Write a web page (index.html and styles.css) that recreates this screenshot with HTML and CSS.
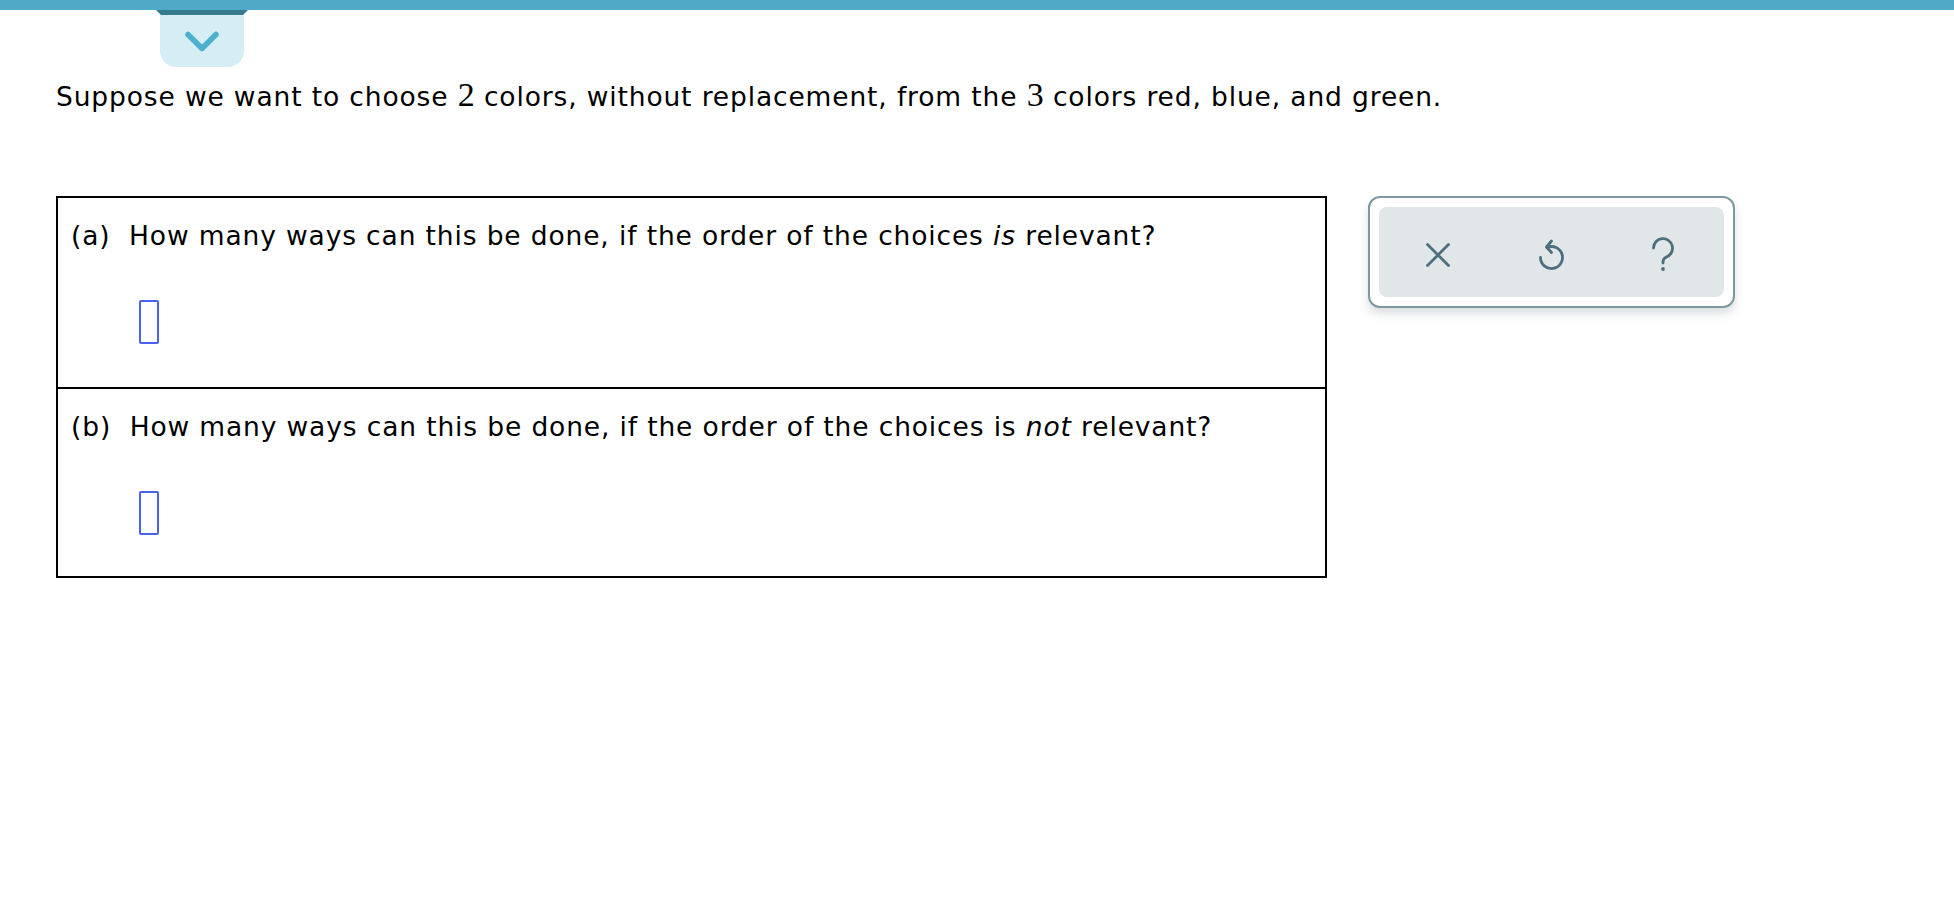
FILE: index.html
```html
<!DOCTYPE html>
<html>
<head>
<meta charset="utf-8">
<link rel="stylesheet" href="styles.css">
</head>
<body>
<div class="topbar"></div>
<div class="tabrow">
  <div class="tab">
    <div class="tab-edge"></div>
    <svg class="chev" width="36" height="24" viewBox="0 0 36 24"><path d="M4 4.5 L18 18.5 L32 4.5" fill="none" stroke="#4db0cc" stroke-width="5.5" stroke-linecap="round" stroke-linejoin="round"/></svg>
  </div>
</div>
<div class="content">
  <p class="intro">Suppose we want to choose <span class="num">2</span> colors, without replacement, from the <span class="num">3</span> colors red, blue, and green.</p>
  <div class="work">
    <div class="qtable">
      <div class="qrow">
        <div class="qtext">(a)&nbsp; How many ways can this be done, if the order of the choices <i>is</i> relevant?</div>
        <div class="answer"><span class="box"></span></div>
      </div>
      <div class="qrow">
        <div class="qtext">(b)&nbsp; How many ways can this be done, if the order of the choices is <i>not</i> relevant?</div>
        <div class="answer"><span class="box"></span></div>
      </div>
    </div>
    <div class="panel">
      <div class="tools">
        <svg width="30" height="30" viewBox="0 0 30 30"><path d="M4.5 4.5 L25.5 25.5 M25.5 4.5 L4.5 25.5" stroke="#4b6f7c" stroke-width="2.8" stroke-linecap="round" fill="none"/></svg>
        <svg width="30" height="34" viewBox="0 0 30 34"><path d="M11 9.5 A11 11 0 1 1 4.5 19.5" stroke="#4b6f7c" stroke-width="2.8" stroke-linecap="round" fill="none"/><path d="M15.5 3 L10.5 9 L15.5 14.5" stroke="#4b6f7c" stroke-width="2.8" stroke-linecap="round" stroke-linejoin="round" fill="none"/></svg>
        <svg width="28" height="36" viewBox="0 0 28 36"><path d="M4.5 11 A9.5 9.5 0 1 1 17.5 20 Q14 21.5 14 25 L14 26" stroke="#4b6f7c" stroke-width="2.8" stroke-linecap="round" fill="none"/><circle cx="14" cy="32" r="1.9" fill="#4b6f7c"/></svg>
      </div>
    </div>
  </div>
</div>
</body>
</html>
```

FILE: styles.css
```css
html, body {
  margin: 0;
  padding: 0;
  background: #ffffff;
}
body {
  font-family: "DejaVu Sans", Verdana, sans-serif;
  color: #000;
}
.topbar {
  height: 10px;
  background: #4eaac7;
}
.tabrow {
  display: flex;
  padding-left: 160px;
}
.tab {
  position: relative;
  width: 84px;
  height: 57px;
  background: #d4eef4;
  border-radius: 0 0 16px 16px;
  display: flex;
  justify-content: center;
  align-items: center;
}
.tab-edge {
  position: absolute;
  top: 0;
  left: -4px;
  right: -4px;
  height: 5px;
  background: #357a8f;
  clip-path: polygon(0 0, 100% 0, calc(100% - 5px) 100%, 5px 100%);
}
.chev {
  display: block;
  margin-top: 6px;
}
.content {
  padding-left: 56px;
}
.intro {
  margin: 0;
  padding-top: 8px;
  font-size: 26.5px;
  letter-spacing: 0.86px;
  line-height: 40px;
  height: 40px;
  white-space: nowrap;
}
.num {
  font-family: "Liberation Serif", "Times New Roman", serif;
  font-size: 34px;
  letter-spacing: 0;
}
.work {
  display: flex;
  align-items: flex-start;
  margin-top: 81px;
}
.qtable {
  width: 1267px;
  border: 2px solid #000;
}
.qrow {
  height: 189px;
  box-sizing: border-box;
  padding: 20px 0 0 13px;
  font-size: 26.5px;
  letter-spacing: 0.86px;
  white-space: nowrap;
}
.qrow + .qrow {
  border-top: 2px solid #000;
}
.qtext {
  line-height: 36px;
}
.answer {
  padding: 46px 0 0 68px;
}
.box {
  display: block;
  width: 16px;
  height: 40px;
  border: 2px solid #4b61f2;
  border-radius: 2px;
}
.panel {
  margin-left: 41px;
  width: 367px;
  height: 112px;
  box-sizing: border-box;
  border: 2px solid #7e98a2;
  border-radius: 12px;
  background: #fff;
  padding: 9px;
  box-shadow: 0 6px 10px rgba(60, 80, 90, 0.18);
}
.tools {
  height: 100%;
  background: #e1e6e9;
  border-radius: 8px;
  display: flex;
  align-items: center;
  padding-left: 44px;
  gap: 83px;
  padding-top: 6px;
  box-sizing: border-box;
}
.tools svg {
  display: block;
}
```
